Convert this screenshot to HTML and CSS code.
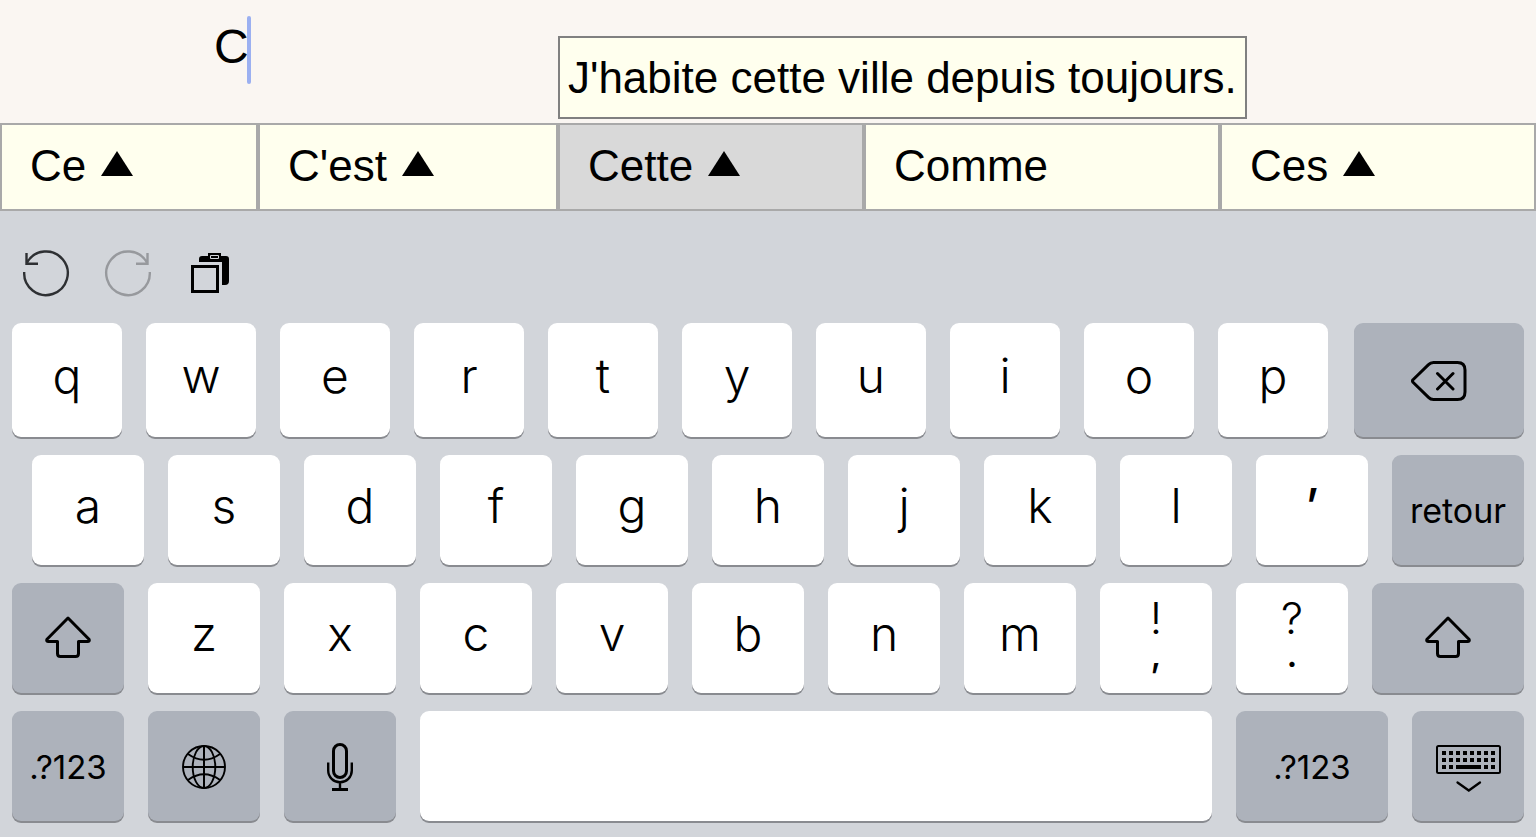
FILE: index.html
```html
<!DOCTYPE html>
<html lang="fr">
<head>
<meta charset="utf-8">
<meta name="viewport" content="width=device-width, initial-scale=1">
<title>Clavier</title>
<link rel="stylesheet" href="styles.css">
</head>
<body>
<svg class="sprite" aria-hidden="true">
  <symbol id="triangle" viewBox="0 0 32 25"><path d="M16 0 32 25H0z"/></symbol>
  <symbol id="shift" viewBox="0 0 46 42"><path d="M23 2 2 23.200Q1 25.500 3.500 25.500H12.500V37.500Q12.500 40.500 15.500 40.500H30.500Q33.500 40.500 33.500 37.500V25.500H42.500Q45 25.500 44 23.200Z" fill="none" stroke="currentColor" stroke-width="3" stroke-linejoin="round"/></symbol>
</svg>
<main class="screen">
  <div class="editor">
    <input class="editor-input" type="text" value="C" aria-label="Texte">
    <span class="caret"></span>
  </div>
  <ul class="suggestions">
    <li class="suggestion s-ce"><button type="button">Ce<svg class="tri"><use href="#triangle"/></svg></button></li>
    <li class="suggestion s-cest"><button type="button">C'est<svg class="tri"><use href="#triangle"/></svg></button></li>
    <li class="suggestion s-cette selected"><button type="button">Cette<svg class="tri"><use href="#triangle"/></svg></button><div class="example" role="tooltip">J'habite cette ville depuis toujours.</div></li>
    <li class="suggestion s-comme"><button type="button">Comme</button></li>
    <li class="suggestion s-ces"><button type="button">Ces<svg class="tri"><use href="#triangle"/></svg></button></li>
  </ul>
  <section class="keyboard" aria-label="Clavier">
    <div class="toolbar">
      <button type="button" class="tool" aria-label="Annuler"><svg width="48" height="48" viewBox="0 0 48 48" fill="none" stroke="currentColor" stroke-width="2.400"><path d="M2.200 23A21.800 21.800 0 1 0 5 13.500M4.500 4V14.700H16"/></svg></button>
      <button type="button" class="tool dim" aria-label="Rétablir"><svg width="48" height="48" viewBox="0 0 48 48" fill="none" stroke="currentColor" stroke-width="2.400"><path d="M45.800 23A21.800 21.800 0 1 1 43 13.500M43.500 4V14.700H32"/></svg></button>
      <button type="button" class="tool paste" aria-label="Coller"><svg width="38" height="40" viewBox="0 0 38 40"><path d="M8 9V6Q8 3 11 3H17V0H30V3H35Q38 3 38 6V28Q38 32 34 32H31V9Z"/><path d="M19.500 2.500H27.500V5.500H19.500Z" fill="none" stroke="#d2d5da"/><path d="M1.500 13.500H26.500V38.500H1.500Z" fill="none" stroke="#000" stroke-width="3"/></svg></button>
    </div>
    <div class="row row-top">
      <button type="button" class="key">q</button><button type="button" class="key">w</button><button type="button" class="key">e</button><button type="button" class="key">r</button><button type="button" class="key">t</button><button type="button" class="key">y</button><button type="button" class="key">u</button><button type="button" class="key">i</button><button type="button" class="key">o</button><button type="button" class="key">p</button>
      <button type="button" class="key mod delete" aria-label="Supprimer"><svg width="56" height="40" viewBox="0 0 56 40" fill="none" stroke="currentColor" stroke-width="3" stroke-linecap="round" stroke-linejoin="round"><path d="M2 18.700 17.500 3.600Q19.500 1.500 22.500 1.500H46.500Q54 1.500 54 9V31Q54 38.500 46.500 38.500H22.500Q19.500 38.500 17.500 36.400L2 21.300Q1 20 2 18.700ZM26.500 12.500 42 28M42 12.500 26.500 28"/></svg></button>
    </div>
    <div class="row row-home">
      <button type="button" class="key">a</button><button type="button" class="key">s</button><button type="button" class="key">d</button><button type="button" class="key">f</button><button type="button" class="key">g</button><button type="button" class="key">h</button><button type="button" class="key">j</button><button type="button" class="key">k</button><button type="button" class="key">l</button><button type="button" class="key apostrophe">’</button>
      <button type="button" class="key mod return">retour</button>
    </div>
    <div class="row">
      <button type="button" class="key mod shift" aria-label="Majuscule"><svg width="46" height="42"><use href="#shift"/></svg></button>
      <button type="button" class="key">z</button><button type="button" class="key">x</button><button type="button" class="key">c</button><button type="button" class="key">v</button><button type="button" class="key">b</button><button type="button" class="key">n</button><button type="button" class="key">m</button>
      <button type="button" class="key dual"><span>!</span><span class="lower">,</span></button>
      <button type="button" class="key dual"><span>?</span><span class="lower">.</span></button>
      <button type="button" class="key mod shift wide" aria-label="Majuscule"><svg width="46" height="42"><use href="#shift"/></svg></button>
    </div>
    <div class="row">
      <button type="button" class="key mod">.?123</button>
      <button type="button" class="key mod" aria-label="Langue"><svg width="44" height="44" viewBox="-22 -22 44 44" fill="none" stroke="currentColor" stroke-width="1.900"><circle r="21"/><ellipse rx="11.300" ry="21"/><path d="M-16-13Q0-1.500 16-13M-16 13Q0 1.500 16 13"/><path d="M0-21V21M-21 0H21" stroke-width="2"/></svg></button>
      <button type="button" class="key mod" aria-label="Dictée"><svg width="26" height="48" viewBox="0 0 26 48" fill="none" stroke="currentColor"><rect x="6.500" y="1.500" width="13" height="33" rx="6.500" stroke-width="3"/><path d="M1.200 19.500V27.500A11.800 11.800 0 0 0 24.800 27.500V19.500M13 39.500V46" stroke-width="2.400"/><path d="M5 46.500H21" stroke-width="3"/></svg></button>
      <button type="button" class="key space" aria-label="Espace"></button>
      <button type="button" class="key mod wide">.?123</button>
      <button type="button" class="key mod hide" aria-label="Masquer le clavier"><svg width="65" height="47" viewBox="0 0 65 47"><rect x="1" y="1" width="63" height="27" rx="1.500" fill="none" stroke="currentColor" stroke-width="2"/><path d="M6 8H59M6 15H59" stroke="currentColor" stroke-width="4" stroke-dasharray="4 3"/><path d="M6 20h4v4H6zM13 20h4v4h-4zM20 20h25v4H20zM48 20h4v4h-4zM55 20h4v4h-4z"/><path d="M21.500 37.500 32.800 45.500 44 37.500" fill="none" stroke="currentColor" stroke-width="2.300" stroke-linecap="round"/></svg></button>
    </div>
  </section>
</main>
</body>
</html>
```
FILE: styles.css
```css
* { box-sizing: border-box; }

body {
  margin: 0;
  background: #d2d5da;
  color: #000;
  font-family: "Liberation Sans", Arial, sans-serif;
}

button {
  margin: 0;
  padding: 0;
  border: 0;
  color: inherit;
  font: inherit;
}

svg { display: block; flex: none; }

.sprite { position: absolute; width: 0; height: 0; }

.screen {
  display: flex;
  flex-direction: column;
  min-height: 100vh;
}

.editor {
  position: relative;
  padding: 16px 0 39px 214px;
  background: #faf6f2;
}

.editor-input {
  display: block;
  width: 100%;
  height: 68px;
  padding: 0 0 8px;
  border: 0;
  outline: 0;
  background: none;
  font: 48px "Liberation Sans", Arial, sans-serif;
}

.caret {
  position: absolute;
  top: 16px;
  left: 247px;
  width: 4px;
  height: 68px;
  border-radius: 2px;
  background: #9bb0f1;
}

.suggestions {
  display: flex;
  margin: 0;
  padding: 0;
  list-style: none;
  font-size: 44px;
}

.suggestion { position: relative; }
.s-ce { flex: 258 1 0; }
.s-cest { flex: 300 1 0; }
.s-cette { flex: 306 1 0; }
.s-comme { flex: 356 1 0; }
.s-ces { flex: 316 1 0; }

.suggestion button {
  display: flex;
  align-items: center;
  gap: 15px;
  width: 100%;
  height: 88px;
  padding: 0 0 2px 28px;
  border: 2px solid #a9a9a9;
  background: #ffffee;
}

.suggestion.selected button { background: #d9d9d9; }

.tri { width: 32px; height: 25px; margin-bottom: 6px; }

.example {
  position: absolute;
  bottom: 92px;
  left: 0;
  padding: 15px 8px 14px;
  border: 2px solid #808080;
  background: #ffffee;
  line-height: 50px;
  white-space: nowrap;
}

.keyboard {
  display: flex;
  flex: 1;
  flex-direction: column;
  gap: 18px;
  padding: 0 12px 16px;
  background: #d2d5da;
  font-family: Inter, "Noto Sans", sans-serif;
}

.toolbar {
  display: flex;
  align-items: center;
  gap: 34px;
  height: 94px;
  padding: 30px 10px 0;
}

.tool { background: none; color: #2e3033; }
.tool.dim { color: #97999d; }
.tool.paste { color: #000; margin-left: 5px; }

.row {
  display: flex;
  flex: 1;
  gap: 24px;
  min-height: 110px;
}

.row-top { min-height: 114px; }
.row-home { padding-left: 20px; }

.key {
  display: flex;
  flex: 112 1 0;
  align-items: center;
  justify-content: center;
  min-width: 0;
  padding-bottom: 10px;
  border-radius: 9px;
  background: #fff;
  box-shadow: 0 2px 0 #898b90;
  font-size: 48px;
  font-weight: 300;
}

.key.apostrophe { font-weight: 500; }

.row-top .key { flex-grow: 110; }

.key.mod {
  padding: 2px 0 0;
  background: #adb2bb;
  font-size: 33px;
  font-weight: 400;
}

.row-top .delete { flex-grow: 170; margin-left: 2px; }
.key.return { flex-grow: 132; padding: 0; font-size: 34px; }
.key.shift { padding: 0 0 2px; }
.key.wide { flex-grow: 152; }
.key.space { flex-grow: 792; }
.key.hide { padding-top: 4px; }

.key.dual {
  flex-direction: column;
  padding-bottom: 4px;
  font-size: 44px;
  line-height: 36px;
}

.lower { font-size: 36px; font-weight: 500; }
```
